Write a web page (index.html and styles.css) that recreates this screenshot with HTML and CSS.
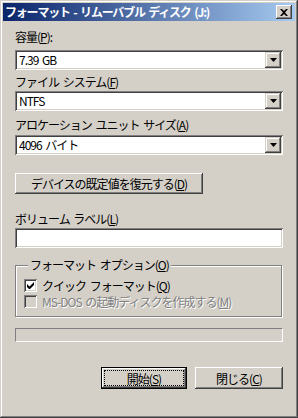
FILE: index.html
```html
<!DOCTYPE html>
<html lang="ja">
<head>
    <meta charset="UTF-8">
    <title>フォーマット - リムーバブル ディスク (J:)</title>
    <link rel="stylesheet" href="styles.css">
</head>
<body>
<div class="window">
    <div class="titlebar">
        <span class="title">フォーマット - リムーバブル ディスク (J:)</span>
        <span class="close-btn">
            <svg width="8" height="7" viewBox="0 0 8 7"><path d="M0 0h2l2 2 2-2h2L5 3.5 8 7H6L4 5 2 7H0l3-3.5z" fill="#000"/></svg>
        </span>
    </div>
    <div class="content">
        <div class="label first">容量(<u>P</u>):</div>
        <div class="combo c1">
            <span class="combo-text">7.39 GB</span>
            <span class="drop-btn"><svg width="7" height="4" viewBox="0 0 7 4"><path d="M0 0h7L3.5 4z" fill="#000"/></svg></span>
        </div>

        <div class="label l2">ファイル システム(<u>F</u>)</div>
        <div class="combo c2">
            <span class="combo-text">NTFS</span>
            <span class="drop-btn"><svg width="7" height="4" viewBox="0 0 7 4"><path d="M0 0h7L3.5 4z" fill="#000"/></svg></span>
        </div>

        <div class="label l3">アロケーション ユニット サイズ(<u>A</u>)</div>
        <div class="combo c3">
            <span class="combo-text">4096 バイト</span>
            <span class="drop-btn"><svg width="7" height="4" viewBox="0 0 7 4"><path d="M0 0h7L3.5 4z" fill="#000"/></svg></span>
        </div>

        <div class="btn restore-btn">デバイスの既定値を復元する(<u>D</u>)</div>

        <div class="label l4">ボリューム ラベル(<u>L</u>)</div>
        <div class="textbox"></div>

        <fieldset class="group">
            <legend>フォーマット オプション(<u>O</u>)</legend>
            <div class="check-row">
                <span class="checkbox">
                    <svg width="7" height="7" viewBox="0 0 7 7"><path d="M0 2v3l2 2h1l4-4V0L2.5 4.5z" fill="#000"/></svg>
                </span>
                <span>クイック フォーマット(<u>Q</u>)</span>
            </div>
            <div class="check-row disabled">
                <span class="checkbox"></span>
                <span>MS-DOS の起動ディスクを作成する(<u>M</u>)</span>
            </div>
        </fieldset>

        <div class="progress"></div>

        <div class="actions">
            <div class="btn default-btn"><span class="focus">開始(<u>S</u>)</span></div>
            <div class="btn">閉じる(<u>C</u>)</div>
        </div>
    </div>
</div>
</body>
</html>
```

FILE: styles.css
```css
body {
    margin: 0;
    background: #d4d0c8;
    font-family: "Noto Sans CJK JP", "Liberation Sans", sans-serif;
    font-size: 12px;
    color: #000;
    word-spacing: 2px;
}
u {
    text-decoration: underline;
    text-underline-offset: 1px;
}
.window {
    width: 298px;
    height: 418px;
    box-sizing: border-box;
    padding: 3px;
    background: #d4d0c8;
    box-shadow: inset -1px -1px #404040, inset 1px 1px #d4d0c8,
                inset -2px -2px #808080, inset 2px 2px #fff;
}
.titlebar {
    height: 18px;
    display: flex;
    align-items: center;
    justify-content: space-between;
    padding: 0 3px 0 2px;
    background: linear-gradient(to right, #0a246a, #a6caf0);
}
.title {
    color: #fff;
    font-weight: bold;
    letter-spacing: -1.2px;
    line-height: 14px;
    white-space: nowrap;
}
.close-btn {
    width: 16px;
    height: 14px;
    display: flex;
    align-items: center;
    justify-content: center;
    background: #d4d0c8;
    box-shadow: inset -1px -1px #404040, inset 1px 1px #fff,
                inset -2px -2px #808080, inset 2px 2px #d4d0c8;
}
.content {
    padding: 9px 12px 0;
}
.label {
    line-height: 14px;
    height: 14px;
    letter-spacing: -1px;
    white-space: nowrap;
}
.l2 { margin-top: 5px; }
.l3 { margin-top: 7px; }
.l4 { margin-top: 18px; }
.combo {
    height: 20px;
    box-sizing: border-box;
    padding: 2px;
    display: flex;
    background: #fff;
    box-shadow: inset 1px 1px #808080, inset -1px -1px #fff,
                inset 2px 2px #404040, inset -2px -2px #d4d0c8;
}
.c1 { margin-top: 6px; }
.c2 { margin-top: 2px; }
.c3 { margin-top: 3px; }
.combo-text {
    flex: 1;
    padding-left: 2px;
    line-height: 16px;
    letter-spacing: -1px;
}
.drop-btn {
    width: 16px;
    height: 16px;
    display: flex;
    align-items: center;
    justify-content: center;
    background: #d4d0c8;
    box-shadow: inset -1px -1px #404040, inset 1px 1px #d4d0c8,
                inset -2px -2px #808080, inset 2px 2px #fff;
}
.btn {
    height: 21px;
    box-sizing: border-box;
    display: flex;
    align-items: center;
    justify-content: center;
    letter-spacing: -1px;
    background: #d4d0c8;
    box-shadow: inset -1px -1px #404040, inset 1px 1px #fff,
                inset -2px -2px #808080, inset 2px 2px #d4d0c8;
}
.restore-btn {
    width: 188px;
    margin-top: 18px;
}
.textbox {
    height: 20px;
    margin-top: 2px;
    background: #fff;
    box-shadow: inset 1px 1px #808080, inset -1px -1px #fff,
                inset 2px 2px #404040, inset -2px -2px #d4d0c8;
}
.group {
    margin: 10px 0 0;
    padding: 5px 8px 6px 8px;
    height: 59px;
    box-sizing: border-box;
    border: 1px solid #808080;
    box-shadow: inset 1px 1px #fff, 1px 1px #fff;
    width: 267px;
}
.group legend {
    padding: 0 2px;
    margin-left: 4px;
    line-height: 14px;
    letter-spacing: -1px;
    background: #d4d0c8;
}
.check-row {
    display: flex;
    align-items: center;
    height: 16px;
    letter-spacing: -1px;
    white-space: nowrap;
}
.checkbox {
    width: 13px;
    height: 13px;
    box-sizing: border-box;
    margin-right: 5px;
    display: flex;
    align-items: center;
    justify-content: center;
    background: #fff;
    box-shadow: inset 1px 1px #808080, inset -1px -1px #fff,
                inset 2px 2px #404040, inset -2px -2px #d4d0c8;
}
.disabled {
    color: #808080;
    text-shadow: 1px 1px #fff;
}
.disabled .checkbox {
    background: #d4d0c8;
}
.progress {
    height: 14px;
    margin-top: 11px;
    box-sizing: border-box;
    border: 1px solid;
    border-color: #808080 #fff #fff #808080;
}
.actions {
    display: flex;
    justify-content: flex-end;
    gap: 8px;
    margin-top: 25px;
}
.actions .btn {
    width: 88px;
    height: 22px;
}
.default-btn {
    width: 86px !important;
    border: 1px solid #000;
    padding: 3px;
}
.focus {
    flex: 1;
    align-self: stretch;
    display: flex;
    align-items: center;
    justify-content: center;
    outline: 1px dotted #000;
}
```
